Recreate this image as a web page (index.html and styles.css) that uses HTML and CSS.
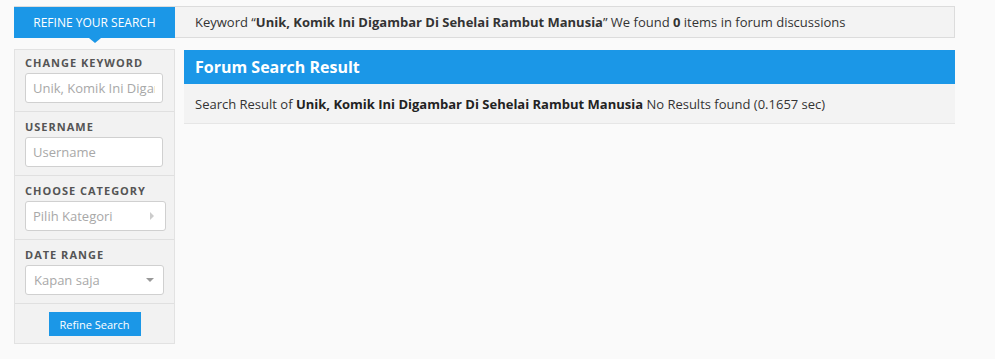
FILE: index.html
```html
<!DOCTYPE html>
<html lang="id">
<head>
    <meta charset="UTF-8">
    <title>Search Result</title>
    <link rel="stylesheet" href="styles.css">
</head>
<body>
    <div class="wrap">
        <div class="search-bar">
            <div class="refine-tab">REFINE YOUR SEARCH</div>
            <div class="search-info">Keyword &ldquo;<b>Unik, Komik Ini Digambar Di Sehelai Rambut Manusia</b>&rdquo; We found <b>0</b> items in forum discussions</div>
        </div>
        <div class="content">
            <div class="sidebar">
                <div class="side-section">
                    <div class="side-label">CHANGE KEYWORD</div>
                    <input class="side-input" type="text" placeholder="Unik, Komik Ini Digambar Di Sehelai Rambut Manusia">
                </div>
                <div class="side-section">
                    <div class="side-label">USERNAME</div>
                    <input class="side-input" type="text" placeholder="Username">
                </div>
                <div class="side-section">
                    <div class="side-label">CHOOSE CATEGORY</div>
                    <div class="side-select wide">
                        <span>Pilih Kategori</span>
                        <span class="arrow-right"></span>
                    </div>
                </div>
                <div class="side-section">
                    <div class="side-label">DATE RANGE</div>
                    <div class="side-select">
                        <span>Kapan saja</span>
                        <span class="arrow-down"></span>
                    </div>
                </div>
                <div class="side-button">
                    <button class="refine-btn">Refine Search</button>
                </div>
            </div>
            <div class="result">
                <div class="result-head">Forum Search Result</div>
                <div class="result-body">Search Result of <b>Unik, Komik Ini Digambar Di Sehelai Rambut Manusia</b> No Results found (0.1657 sec)</div>
            </div>
        </div>
    </div>
</body>
</html>
```

FILE: styles.css
```css
body {
    margin: 0;
    padding: 0;
    background: #fafafa;
    font-family: "Open Sans", Arial, sans-serif;
    color: #333;
}
.wrap {
    width: 941px;
    padding: 6px 0 0 14px;
}
.search-bar {
    display: flex;
    height: 30px;
    border: 1px solid #dcdcdc;
    background: #f3f3f3;
}
.refine-tab {
    position: relative;
    width: 161px;
    margin: 0 0 -1px -1px;
    background: #1b97e7;
    color: #fff;
    font-size: 12px;
    line-height: 31px;
    text-align: center;
}
.refine-tab:after {
    content: "";
    position: absolute;
    left: 75px;
    bottom: -5px;
    border-left: 6px solid transparent;
    border-right: 6px solid transparent;
    border-top: 5px solid #1b97e7;
}
.search-info {
    padding-left: 20px;
    font-size: 13px;
    line-height: 30px;
}
.search-info b {
    font-weight: 700;
}
.content {
    display: flex;
    margin-top: 11px;
}
.sidebar {
    width: 159px;
    border: 1px solid #e2e2e2;
    background: #f2f2f2;
}
.side-section {
    padding: 8px 10px 8px;
    border-bottom: 1px solid #e0e0e0;
}
.side-section:first-child {
    padding-top: 6px;
}
.side-label {
    font-size: 11px;
    font-weight: 700;
    letter-spacing: 1px;
    color: #555;
    line-height: 13px;
    margin-bottom: 4px;
}
.side-input {
    display: block;
    box-sizing: border-box;
    width: 138px;
    height: 30px;
    padding: 0 7px;
    border: 1px solid #d0d0d0;
    border-radius: 3px;
    background: #fff;
    font-family: "Open Sans", Arial, sans-serif;
    font-size: 13px;
    color: #333;
    outline: none;
}
.side-input::placeholder {
    color: #a8a8a8;
}
.side-select {
    display: flex;
    justify-content: space-between;
    align-items: center;
    box-sizing: border-box;
    width: 139px;
    height: 30px;
    padding: 0 9px 0 8px;
    border: 1px solid #d0d0d0;
    border-radius: 3px;
    background: #fff;
    font-size: 13px;
    color: #a8a8a8;
}
.side-select.wide {
    width: 141px;
    padding-left: 7px;
    padding-right: 11px;
}
.arrow-right {
    border-top: 4px solid transparent;
    border-bottom: 4px solid transparent;
    border-left: 4px solid #ccc;
}
.arrow-down {
    border-left: 4px solid transparent;
    border-right: 4px solid transparent;
    border-top: 4px solid #999;
}
.side-button {
    padding: 8px 0 7px;
    text-align: center;
}
.refine-btn {
    display: block;
    margin: 0 auto;
    height: 24px;
    width: 92px;
    border: none;
    background: #1b97e7;
    color: #fff;
    font-family: "Open Sans", Arial, sans-serif;
    font-size: 11px;
    cursor: pointer;
}
.result {
    flex: 1;
    margin-left: 9px;
    align-self: flex-start;
    margin-top: 1px;
}
.result-head {
    height: 34px;
    padding-left: 11px;
    background: #1b97e7;
    color: #fff;
    font-size: 16px;
    font-weight: 700;
    line-height: 34px;
}
.result-body {
    height: 39px;
    padding-left: 11px;
    background: #f3f3f3;
    border-bottom: 1px solid #e6e6e6;
    font-size: 13px;
    line-height: 40px;
    color: #333;
}
.result-body b {
    color: #222;
}
```
